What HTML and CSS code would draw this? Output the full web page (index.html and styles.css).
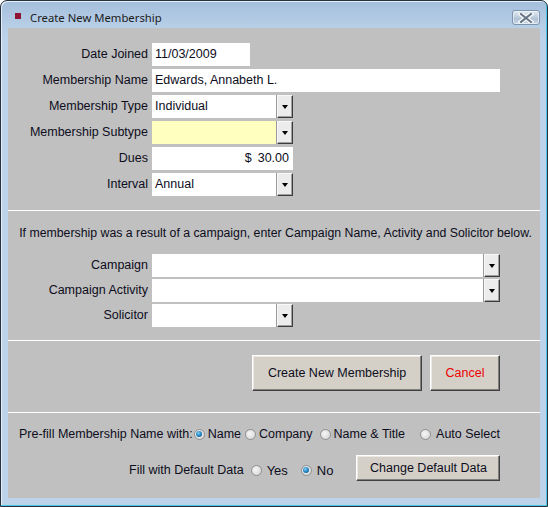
FILE: index.html
```html
<!DOCTYPE html>
<html>
<head>
<meta charset="utf-8">
<link rel="stylesheet" href="styles.css">
</head>
<body>
<div class="window">
  <div class="titlebar">
    <span class="app-icon"></span>
    <span class="title">Create New Membership</span>
    <span class="close-btn">
      <svg width="16" height="10" viewBox="0 0 16 10">
        <path d="M3 1 L13 9 M13 1 L3 9" stroke="#ffffff" stroke-width="4.5" stroke-linecap="square"/>
        <path d="M3 1 L13 9 M13 1 L3 9" stroke="#6a7888" stroke-width="2.2" stroke-linecap="square"/>
      </svg>
    </span>
  </div>
  <div class="content">
    <div class="section form-grid main-grid">
      <label class="lbl">Date Joined</label>
      <div class="field w-date">11/03/2009</div>
      <label class="lbl">Membership Name</label>
      <div class="field w-wide">Edwards, Annabeth L.</div>
      <label class="lbl">Membership Type</label>
      <div class="combo w-mid"><span class="combo-text">Individual</span><span class="drop"><i></i></span></div>
      <label class="lbl">Membership Subtype</label>
      <div class="combo w-mid yellow"><span class="combo-text"></span><span class="drop"><i></i></span></div>
      <label class="lbl">Dues</label>
      <div class="field w-mid right"><span class="cur">$</span><span>30.00</span></div>
      <label class="lbl">Interval</label>
      <div class="combo w-mid"><span class="combo-text">Annual</span><span class="drop"><i></i></span></div>
    </div>
    <div class="sep"></div>
    <div class="section campaign">
      <p class="note">If membership was a result of a campaign, enter Campaign Name, Activity and Solicitor below.</p>
      <div class="form-grid camp-grid">
        <label class="lbl">Campaign</label>
        <div class="combo w-wide"><span class="combo-text"></span><span class="drop"><i></i></span></div>
        <label class="lbl">Campaign Activity</label>
        <div class="combo w-wide"><span class="combo-text"></span><span class="drop"><i></i></span></div>
        <label class="lbl">Solicitor</label>
        <div class="combo w-mid"><span class="combo-text"></span><span class="drop"><i></i></span></div>
      </div>
    </div>
    <div class="sep"></div>
    <div class="section actions">
      <button class="btn btn-create">Create New Membership</button>
      <button class="btn btn-cancel">Cancel</button>
    </div>
    <div class="sep"></div>
    <div class="section options">
      <div class="opt-row prefill">
        <span class="opt-label">Pre-fill Membership Name with:</span>
        <span class="radio checked r-name"></span><span class="rtext">Name</span>
        <span class="radio r-company"></span><span class="rtext">Company</span>
        <span class="radio r-title"></span><span class="rtext">Name &amp; Title</span>
        <span class="radio r-auto"></span><span class="rtext">Auto Select</span>
      </div>
      <div class="opt-row fill">
        <span class="opt-label">Fill with Default Data</span>
        <span class="radio r-yes"></span><span class="rtext yn">Yes</span>
        <span class="radio checked r-no"></span><span class="rtext yn">No</span>
        <button class="btn btn-default">Change Default Data</button>
      </div>
    </div>
  </div>
</div>
</body>
</html>
```
FILE: styles.css
```css
html, body {
  margin: 0;
  padding: 0;
  background: #ffffff;
}
body {
  font-family: "Liberation Sans", Arial, sans-serif;
  font-size: 12.5px;
  color: #0d0d1c;
}
.window {
  width: 548px;
  height: 507px;
  box-sizing: border-box;
  border: 1px solid #26313d;
  border-radius: 7px 7px 0 0;
  background: linear-gradient(#a4bedb 0px, #b6cde6 24px, #bcd3ea 40px, #bcd3ea 100%);
  box-shadow: inset -1px -1px 0 #48c6e6, inset 1px 1px 0 #e4eef8;
  padding: 0 6px 8px 7px;
  display: flex;
  flex-direction: column;
}
.titlebar {
  height: 27px;
  display: flex;
  align-items: center;
  position: relative;
}
.app-icon {
  width: 6px;
  height: 6px;
  background: #8e1533;
  margin-left: 7px;
  margin-top: 3px;
}
.title {
  margin-left: 9px;
  font-family: "Noto Sans", "Open Sans", sans-serif;
  font-size: 11.3px;
  color: #1b1b1b;
  margin-top: 6px;
}
.close-btn {
  position: absolute;
  right: 1px;
  top: 9px;
  width: 26px;
  height: 13px;
  border: 1px solid #7d93ae;
  border-radius: 3px;
  background: linear-gradient(#dfe8f2, #bccbdc 50%, #aebfd4 51%, #c4d4e6);
  box-shadow: inset 0 0 0 1px rgba(255,255,255,0.55);
  display: flex;
  align-items: center;
  justify-content: center;
}
.content {
  width: 532px;
  height: 470px;
  background: #c0c0c0;
  display: flex;
  flex-direction: column;
}
.sep {
  height: 1px;
  background: #ffffff;
}
.form-grid {
  display: grid;
  grid-template-columns: 140px auto;
  column-gap: 4px;
  justify-content: start;
  align-items: center;
}
.main-grid {
  padding-top: 15px;
  padding-bottom: 14px;
  grid-auto-rows: 23px;
  row-gap: 3px;
}
.lbl {
  text-align: right;
  white-space: nowrap;
  line-height: 23px;
}
.field, .combo {
  height: 23px;
  box-sizing: border-box;
  background: #ffffff;
  line-height: 23px;
  padding-left: 3px;
  white-space: nowrap;
}
.w-date { width: 98px; }
.w-wide { width: 348px; }
.w-mid { width: 141px; }
.right {
  display: flex;
  justify-content: flex-end;
  padding-right: 4px;
  gap: 6px;
}
.combo {
  display: flex;
  padding-left: 0;
}
.combo-text {
  flex: 1;
  padding-left: 3px;
}
.yellow .combo-text { background: #ffffc0; }
.drop {
  width: 16px;
  height: 23px;
  box-sizing: border-box;
  background: #ececec;
  border-top: 1px solid #f8f8f8;
  border-left: 1px solid #f8f8f8;
  border-right: 1px solid #3c3c3c;
  border-bottom: 1px solid #3c3c3c;
  box-shadow: inset -1px -1px 0 #a0a0a0, -1px 0 0 #9a9a9a;
  display: flex;
  align-items: center;
  justify-content: center;
}
.drop i {
  width: 0;
  height: 0;
  border-left: 3.5px solid transparent;
  border-right: 3.5px solid transparent;
  border-top: 4px solid #000000;
  margin-top: 1px;
}
.campaign {
  padding-top: 15px;
  padding-bottom: 13px;
}
.note {
  margin: 0 0 14px 0;
  font-size: 12.3px;
  line-height: 14px;
  text-align: center;
  padding-left: 3px;
  white-space: nowrap;
}
.camp-grid {
  grid-auto-rows: 23px;
  row-gap: 2px;
}
.actions {
  display: flex;
  justify-content: flex-end;
  gap: 8px;
  padding: 14px 40px 21px 0;
}
.btn {
  font-family: "Liberation Sans", Arial, sans-serif;
  font-size: 12.5px;
  color: #0d0d1c;
  background: #d4d0c8;
  border-style: solid;
  border-width: 1px;
  border-color: #ffffff #404040 #404040 #ffffff;
  box-shadow: inset -1px -1px 0 #808080, inset 1px 1px 0 #ece9e4;
  padding: 0;
  margin: 0;
  box-sizing: border-box;
}
.btn-create { width: 170px; height: 36px; }
.btn-cancel { width: 70px; height: 36px; color: #ee0000; }
.options {
  padding-top: 14px;
}
.opt-row {
  display: flex;
  align-items: center;
  white-space: nowrap;
}
.prefill {
  height: 14px;
  padding-left: 11px;
}
.fill {
  height: 26px;
  margin-top: 16px;
  padding-left: 121px;
}
.radio {
  width: 11px;
  height: 11px;
  box-sizing: border-box;
  border-radius: 50%;
  border: 1px solid #8e8f8f;
  background: radial-gradient(circle at 40% 40%, #f6f6f6 0, #dcdcdc 70%, #cfcfcf 100%);
  flex: none;
  position: relative;
}
.radio.checked::after {
  content: "";
  position: absolute;
  left: 1.5px;
  top: 1.5px;
  width: 6px;
  height: 6px;
  border-radius: 50%;
  background: radial-gradient(circle at 40% 35%, #7fd0f4 0, #1d7fc0 55%, #0e3f6a 100%);
}
.rtext { margin-left: 3px; }
.yn { margin-left: 5px; font-size: 13px; }
.r-name { margin-left: 1px; }
.r-company { margin-left: 4px; }
.r-title { margin-left: 7px; }
.r-auto { margin-left: 15px; margin-right: 2px; }
.r-yes { margin-left: 7px; }
.r-no { margin-left: 13px; }
.btn-default {
  width: 144px;
  height: 26px;
  margin-left: 23px;
  margin-top: -4px;
}
```
